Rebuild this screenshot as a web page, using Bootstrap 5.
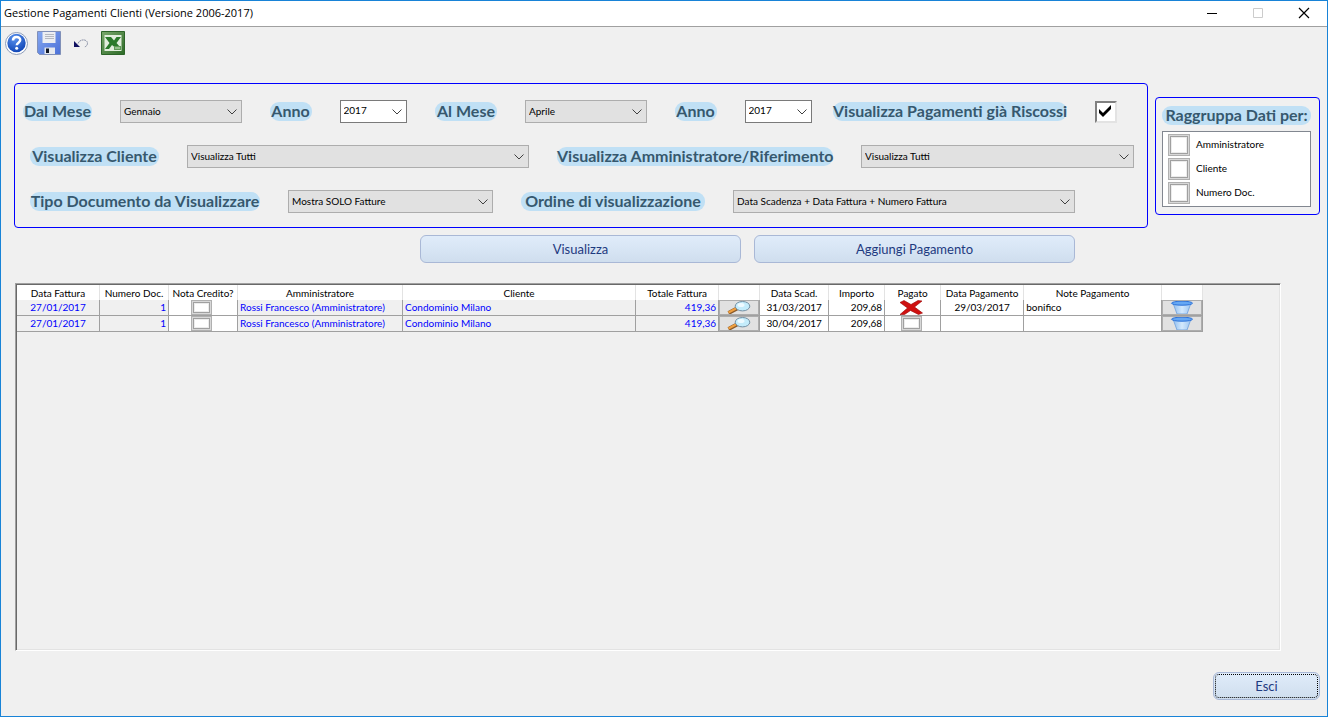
<!DOCTYPE html>
<html lang="it">
<head>
<meta charset="utf-8">
<meta name="viewport" content="width=device-width, initial-scale=1">
<title>Gestione Pagamenti Clienti (Versione 2006-2017)</title>
<link href="https://cdn.jsdelivr.net/npm/bootstrap@5.3.0/dist/css/bootstrap.min.css" rel="stylesheet">
<style>
  :root { --ui: Lato, "Open Sans", sans-serif; --edge: #1883d7; }
  body { font: 10px/14px var(--ui); color: #000; background: #f0f0f0; }
  .app-window { min-height: 100vh; border: 1px solid var(--edge); }
  .title-bar { height: 26px; background: #fff; border-bottom: 1px solid #a0a0a0; padding: 0 0 2px 3px; font: 11px/16px "Open Sans", sans-serif; }
  .title-bar h1 { font: inherit; }
  .title-bar button { width: 46px; height: 24px; }
  .plain-btn { border: 0; background: none; padding: 0; line-height: 0; }
  .tool-strip { padding: 3px 3px 0; height: 56px; }
  .blue-box { border: 1px solid #0000ff; border-radius: 4px; }
  .filters { padding: 16px 0 14px; gap: 22px; }
  .filters .line { height: 23px; gap: 28px; }
  .line-dates { padding: 0 30px 0 8px; }
  .line-who { padding: 0 13px 0 15px; }
  .line-doc { padding: 0 72px 0 15px; }
  .gap-field { gap: 28px; }
  .filters .gap-last { gap: 21px; }
  .pill { background: #c0e0f5; color: #36586e; font: bold 16px/17px var(--ui); padding-bottom: 2px; border-radius: 9px; text-align: center; white-space: nowrap; flex: none; }
  .combo { flex: 1 1 auto; min-width: 0; height: 23px; font: inherit; color: #000; padding: 0 20px 1px 3px; border: 1px solid #adadad; border-radius: 0; appearance: none;
    background: #e1e1e1 url("data:image/svg+xml,%3Csvg xmlns='http://www.w3.org/2000/svg' width='10' height='6' fill='none' stroke='%23404040'%3E%3Cpath d='M.5.5 5 5 9.500.5'/%3E%3C/svg%3E") no-repeat right 4px center; }
  .combo-month { width: 121px; }
  .combo-year { width: 67px; background-color: #fff; border-color: #7a7a7a; padding-bottom: 3px; }
  .combo-wide { width: 342px; }
  .combo-who { width: 273px; }
  .combo-doc { width: 205px; }
  .classic-check { appearance: none; width: 22px; height: 22px; margin: 0; flex: none; background: #fff; border: 2px solid; border-color: #808080 #e3e3e3 #e3e3e3 #808080; }
  .classic-check:checked { background: #fff url("data:image/svg+xml,%3Csvg xmlns='http://www.w3.org/2000/svg' width='12' height='12'%3E%3Cpath d='M0 4 4 8 12 0V4L4 12 0 8z'/%3E%3C/svg%3E") no-repeat 2px 2px; }
  .box-check { appearance: none; margin: 0; width: 22px; height: 22px; flex: none; background: #fff; border: 1px solid #b0b0b0; box-shadow: inset 0 0 0 1px #d8d8d8, inset 0 0 0 2px #a0a0a0, inset 0 0 0 3px #ececec; }
  .grouping { width: 165px; margin-top: 14px; padding: 8px 8px 7px 6px; }
  .grouping .choices { background: #fff; border: 1px solid #828790; padding: 1px 0 0 5px; height: 76px; margin-top: 6px; }
  .grouping .choices label { height: 24px; gap: 6px; }
  .grouping .choices span { padding-bottom: 3px; }
  .panels { padding: 0 7px 0 13px; gap: 7px; }
  .soft-btn { height: 28px; border: 1px solid #a9b8d6; border-radius: 6px; background: linear-gradient(#e0ecfa, #cfdeee); color: #1e3a80; font: 13px/18px var(--ui); padding: 0; }
  .actions { padding: 7px 0 0 419px; gap: 13px; width: 81%; }
  .grid-frame { margin: 20px 46px 0 14px; height: 368px; border: 1px solid; border-color: #a0a0a0 #fff #fff #a0a0a0; box-shadow: inset 1px 1px #696969, inset -1px -1px #e3e3e3; padding: 1px; }
  .pay-grid { width: 94%; table-layout: fixed; border-collapse: separate; border-spacing: 0; }
  .pay-grid th { height: 15px; padding: 1px 0 0; background: #fff; font-weight: 400; line-height: 14px; text-align: center; border-right: 1px solid #e3e3e3; white-space: nowrap; }
  .pay-grid td { height: 16px; line-height: 13px; padding: 0 2px; background: #fff; border-right: 1px solid #a0a0a0; border-bottom: 1px solid #a0a0a0; vertical-align: middle; white-space: nowrap; overflow: hidden; }
  .pay-grid td.locked { background: #f0f0f0; color: #0000ff; }
  .pay-grid td.slot { padding: 0; line-height: 0; text-align: center; }
  .pay-grid td.tick { padding-right: 3px; }
  .pay-grid .box-check { width: 21px; height: 15px; vertical-align: top; }
  .cell-btn { display: block; width: 100%; height: 15px; border: 1px solid #adadad; background: #e1e1e1; padding: 0; line-height: 0; }
  .cell-btn svg { display: block; margin: 0 auto; }
  .foot { padding: 21px 7px 16px; }
  .exit-btn { width: 107px; outline: 1px dotted #000; outline-offset: -3px; }
</style>
</head>
<body>
<svg width="0" height="0" class="position-absolute" aria-hidden="true">
  <defs>
    <radialGradient id="hb" cx=".4" cy=".25" r=".8"><stop offset="0" stop-color="#5a92ee"/><stop offset="1" stop-color="#0d43b4"/></radialGradient>
    <linearGradient id="fl" x1="0" y1="0" x2="1" y2="1"><stop offset="0" stop-color="#86a8f0"/><stop offset="1" stop-color="#4a70d8"/></linearGradient>
    <linearGradient id="xl" x1="0" y1="0" x2="1" y2="1"><stop offset="0" stop-color="#7aa86c"/><stop offset="1" stop-color="#2c6a26"/></linearGradient>
    <linearGradient id="bk" x1="0" x2="1"><stop offset="0" stop-color="#8dbcf0"/><stop offset=".5" stop-color="#d4e9fc"/><stop offset="1" stop-color="#9ac4f2"/></linearGradient>
    <symbol id="lens" viewBox="0 0 24 13"><path d="M1.500 12 10 7.500" stroke="#8a5a2a" stroke-width="4"/><path d="M1.500 11.500 9 7.500" stroke="#f0a040" stroke-width="2"/><ellipse cx="15.500" cy="5.200" rx="7.300" ry="4.700" fill="#c4ecfb" stroke="#7490a4"/><ellipse cx="14" cy="4" rx="3.500" ry="2" fill="#eefaff"/></symbol>
    <symbol id="bucket" viewBox="0 0 24 13"><path d="M3 2h18l-4 11H7z" fill="url(#bk)" stroke="#7eaade"/><ellipse cx="12" cy="2.200" rx="10.500" ry="2" fill="#66a8f4" stroke="#2a70d8"/></symbol>
  </defs>
</svg>
<div class="app-window d-flex flex-column">
  <header class="title-bar d-flex align-items-center">
    <h1 class="m-0 me-auto">Gestione Pagamenti Clienti (Versione 2006-2017)</h1>
    <button class="plain-btn" aria-label="Riduci"><svg width="12" height="12" stroke="#000"><path d="M1 6.500h10"/></svg></button>
    <button class="plain-btn" aria-label="Ingrandisci" disabled><svg width="12" height="12" fill="none" stroke="#ccc"><path d="M1.500 1.500h9v9h-9z"/></svg></button>
    <button class="plain-btn" aria-label="Chiudi"><svg width="12" height="12" fill="none" stroke="#000" stroke-width="1.200"><path d="M1 1l10 10M11 1L1 11"/></svg></button>
  </header>

  <nav class="tool-strip d-flex align-items-start" aria-label="Strumenti">
    <button class="plain-btn" aria-label="Aiuto"><svg width="26" height="26" viewBox="0 0 26 26">
      <circle cx="12.500" cy="13.500" r="11" fill="#fff" stroke="#8b9cba"/><circle cx="12.500" cy="13" r="9.200" fill="url(#hb)"/>
      <path d="M9 10.500c0-4.500 7.200-4.500 7.200-.4 0 2.600-3.400 2.600-3.400 5.200" fill="none" stroke="#fff" stroke-width="2.500"/><circle cx="12.700" cy="18.200" r="1.500" fill="#fff"/></svg></button>
    <button class="plain-btn ms-1" aria-label="Salva"><svg width="28" height="26" viewBox="0 0 28 26">
      <path d="M3.500 1.500h23v23h-21l-2-2z" fill="url(#fl)" stroke="#8090b8"/><path d="M8.500 2h13v11h-13z" fill="#eceef2"/><path d="M11 4.500h9M11 6.500h9M11 8.500h9" stroke="#b4b8c0"/>
      <path d="M10.500 17.500H21V24H10.500z" fill="#e6e9ee"/><path d="M12 18.500h3v4.500h-3z" fill="#101828"/></svg></button>
    <button class="plain-btn ms-2" aria-label="Annulla"><svg width="24" height="26" viewBox="0 0 24 26">
      <path d="M8 13.500c2-5 9-4.500 9.500-.5 0 2.500-1.500 3.500-3 4" fill="none" stroke="#8c93a8" stroke-dasharray="2 .5"/><path d="M4 11v6h6z" fill="#101060"/></svg></button>
    <button class="plain-btn ms-1" aria-label="Esporta in Excel"><svg width="28" height="26" viewBox="0 0 28 26">
      <path d="M3.500 1.500h23v23h-23z" fill="url(#xl)" stroke="#2c6428"/><path d="M6.500 5h17v16h-17z" fill="#e2eedd"/>
      <path d="M7 7h6l3 3.500L18.500 7H23l-4.500 6 4 4.500H17L14 15l-3 4H7l4.500-6z" fill="#2b7a2b"/><path d="M16 16h7v4h-7z" fill="#5c9a54"/><path d="M17 18h5" stroke="#cfe4c8"/></svg></button>
  </nav>

  <main>
    <div class="panels d-flex align-items-start">
      <form class="blue-box filters d-flex flex-column flex-grow-1">
        <div class="line line-dates gap-last d-flex align-items-center">
          <div class="d-flex align-items-center gap-field flex-grow-1">
            <label class="pill" style="width:69px" for="m1">Dal Mese</label>
            <select class="combo combo-month" id="m1"><option>Gennaio</option></select>
            <label class="pill" style="width:42px" for="y1">Anno</label>
            <select class="combo combo-year" id="y1"><option>2017</option></select>
            <label class="pill" style="width:62px" for="m2">Al Mese</label>
            <select class="combo combo-month" id="m2"><option>Aprile</option></select>
            <label class="pill" style="width:42px" for="y2">Anno</label>
            <select class="combo combo-year" id="y2"><option>2017</option></select>
          </div>
          <div class="d-flex align-items-center gap-field">
            <label class="pill" style="width:234px" for="paid">Visualizza Pagamenti già Riscossi</label>
            <input class="classic-check" type="checkbox" id="paid" checked>
          </div>
        </div>
        <div class="line line-who d-flex align-items-center">
          <label class="pill" style="width:129px" for="cli">Visualizza Cliente</label>
          <select class="combo combo-wide" id="cli"><option>Visualizza Tutti</option></select>
          <label class="pill" style="width:276px" for="amm">Visualizza Amministratore/Riferimento</label>
          <select class="combo combo-who" id="amm"><option>Visualizza Tutti</option></select>
        </div>
        <div class="line line-doc d-flex align-items-center">
          <label class="pill" style="width:230px" for="doc">Tipo Documento da Visualizzare</label>
          <select class="combo combo-doc" id="doc"><option>Mostra SOLO Fatture</option></select>
          <label class="pill" style="width:184px" for="ord">Ordine di visualizzazione</label>
          <select class="combo combo-wide" id="ord"><option>Data Scadenza + Data Fattura + Numero Fattura</option></select>
        </div>
      </form>
      <fieldset class="blue-box grouping" aria-labelledby="grp">
        <div class="pill" id="grp">Raggruppa Dati per:</div>
        <div class="choices">
          <label class="d-flex align-items-center"><input class="box-check" type="checkbox"><span>Amministratore</span></label>
          <label class="d-flex align-items-center"><input class="box-check" type="checkbox"><span>Cliente</span></label>
          <label class="d-flex align-items-center"><input class="box-check" type="checkbox"><span>Numero Doc.</span></label>
        </div>
      </fieldset>
    </div>
    <div class="actions d-flex">
      <button class="soft-btn flex-fill w-50">Visualizza</button>
      <button class="soft-btn flex-fill w-50">Aggiungi Pagamento</button>
    </div>
    <div class="grid-frame">
      <table class="pay-grid">
        <colgroup><col style="width:83px"><col style="width:69px"><col style="width:69px"><col style="width:165px"><col style="width:233px"><col style="width:83px"><col style="width:41px"><col style="width:69px"><col style="width:56px"><col style="width:56px"><col style="width:83px"><col style="width:138px"><col style="width:41px"></colgroup>
        <thead><tr><th>Data Fattura</th><th>Numero Doc.</th><th>Nota Credito?</th><th>Amministratore</th><th>Cliente</th><th>Totale Fattura</th><th></th><th>Data Scad.</th><th>Importo</th><th>Pagato</th><th>Data Pagamento</th><th>Note Pagamento</th><th></th></tr></thead>
        <tbody>
          <tr><td class="locked text-center">27/01/2017</td><td class="locked text-end">1</td><td class="slot tick"><input class="box-check" type="checkbox" aria-label="Nota credito"></td><td class="locked">Rossi Francesco (Amministratore)</td><td class="locked">Condominio Milano</td><td class="locked text-end">419,36</td>
            <td class="slot"><button class="cell-btn" aria-label="Apri fattura"><svg width="24" height="13"><use href="#lens"/></svg></button></td>
            <td class="text-center">31/03/2017</td><td class="text-end">209,68</td>
            <td class="slot tick"><svg width="24" height="15" viewBox="0 0 24 15"><path d="M1 2.500 5 .5l7 4 7-4 4 .5-7.500 6 8 6-4 1.500-8-4-6 4H1L8.500 8z" fill="#d01010" stroke="#900" stroke-width=".6"/></svg></td>
            <td class="text-center">29/03/2017</td><td>bonifico</td>
            <td class="slot"><button class="cell-btn" aria-label="Elimina"><svg width="24" height="13"><use href="#bucket"/></svg></button></td></tr>
          <tr><td class="locked text-center">27/01/2017</td><td class="locked text-end">1</td><td class="slot tick"><input class="box-check" type="checkbox" aria-label="Nota credito"></td><td class="locked">Rossi Francesco (Amministratore)</td><td class="locked">Condominio Milano</td><td class="locked text-end">419,36</td>
            <td class="slot"><button class="cell-btn" aria-label="Apri fattura"><svg width="24" height="13"><use href="#lens"/></svg></button></td>
            <td class="text-center">30/04/2017</td><td class="text-end">209,68</td>
            <td class="slot tick"><input class="box-check" type="checkbox" aria-label="Pagato"></td>
            <td></td><td></td>
            <td class="slot"><button class="cell-btn" aria-label="Elimina"><svg width="24" height="13"><use href="#bucket"/></svg></button></td></tr>
        </tbody>
      </table>
    </div>
  </main>
  <footer class="foot d-flex justify-content-end"><button class="soft-btn exit-btn">Esci</button></footer>
</div>
<script src="https://cdn.jsdelivr.net/npm/bootstrap@5.3.0/dist/js/bootstrap.bundle.min.js"></script>
</body>
</html>
